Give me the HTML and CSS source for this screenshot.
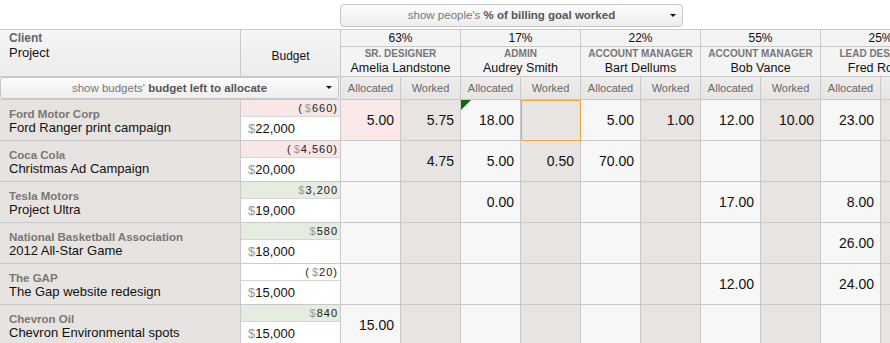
FILE: index.html
```html
<!DOCTYPE html>
<html lang="en">
<head>
    <meta charset="UTF-8">
    <title>Budget Allocation</title>
    <link rel="stylesheet" href="styles.css">
</head>
<body>
    <div class="toolbar">
        <div class="picker picker-people">
            <span>show people's <b>% of billing goal worked</b></span>
            <span class="caret"></span>
        </div>
    </div>
    <table class="grid">
        <colgroup>
            <col class="col-client">
            <col class="col-budget">
            <col class="col-sub"><col class="col-sub">
            <col class="col-sub"><col class="col-sub">
            <col class="col-sub"><col class="col-sub">
            <col class="col-sub"><col class="col-sub">
            <col class="col-sub"><col class="col-sub">
        </colgroup>
        <thead>
            <tr class="row-pct">
                <th class="h-client" rowspan="2">
                    <span class="h-label">Client</span>
                    <span class="h-project">Project</span>
                </th>
                <th class="h-budget" rowspan="2">Budget</th>
                <th class="pct" colspan="2">63%</th>
                <th class="pct" colspan="2">17%</th>
                <th class="pct" colspan="2">22%</th>
                <th class="pct" colspan="2">55%</th>
                <th class="pct" colspan="2">25%</th>
            </tr>
            <tr class="row-person">
                <th class="person" colspan="2"><span class="role">SR. DESIGNER</span><span class="name">Amelia Landstone</span></th>
                <th class="person" colspan="2"><span class="role">ADMIN</span><span class="name">Audrey Smith</span></th>
                <th class="person" colspan="2"><span class="role">ACCOUNT MANAGER</span><span class="name">Bart Dellums</span></th>
                <th class="person" colspan="2"><span class="role">ACCOUNT MANAGER</span><span class="name">Bob Vance</span></th>
                <th class="person" colspan="2"><span class="role">LEAD DESIGNER</span><span class="name">Fred Rosen</span></th>
            </tr>
            <tr class="row-sub">
                <th class="h-select" colspan="2">
                    <div class="picker picker-budget">
                        <span>show budgets' <b>budget left to allocate</b></span>
                        <span class="caret"></span>
                    </div>
                </th>
                <th class="sub">Allocated</th><th class="sub">Worked</th>
                <th class="sub">Allocated</th><th class="sub">Worked</th>
                <th class="sub">Allocated</th><th class="sub">Worked</th>
                <th class="sub">Allocated</th><th class="sub">Worked</th>
                <th class="sub">Allocated</th><th class="sub">Worked</th>
            </tr>
        </thead>
        <tbody>
            <tr>
                <td class="client"><span class="client-name">Ford Motor Corp</span><span class="project">Ford Ranger print campaign</span></td>
                <td class="budget"><div class="left neg">(<i>$</i>660)</div><div class="amount"><i>$</i>22,000</div></td>
                <td class="alloc over">5.00</td><td class="work">5.75</td>
                <td class="alloc note">18.00</td><td class="work selected"></td>
                <td class="alloc">5.00</td><td class="work">1.00</td>
                <td class="alloc">12.00</td><td class="work">10.00</td>
                <td class="alloc">23.00</td><td class="work"></td>
            </tr>
            <tr>
                <td class="client"><span class="client-name">Coca Cola</span><span class="project">Christmas Ad Campaign</span></td>
                <td class="budget"><div class="left neg">(<i>$</i>4,560)</div><div class="amount"><i>$</i>20,000</div></td>
                <td class="alloc"></td><td class="work">4.75</td>
                <td class="alloc">5.00</td><td class="work">0.50</td>
                <td class="alloc">70.00</td><td class="work"></td>
                <td class="alloc"></td><td class="work"></td>
                <td class="alloc"></td><td class="work"></td>
            </tr>
            <tr>
                <td class="client"><span class="client-name">Tesla Motors</span><span class="project">Project Ultra</span></td>
                <td class="budget"><div class="left pos"><i>$</i>3,200</div><div class="amount"><i>$</i>19,000</div></td>
                <td class="alloc"></td><td class="work"></td>
                <td class="alloc">0.00</td><td class="work"></td>
                <td class="alloc"></td><td class="work"></td>
                <td class="alloc">17.00</td><td class="work"></td>
                <td class="alloc">8.00</td><td class="work"></td>
            </tr>
            <tr>
                <td class="client"><span class="client-name">National Basketball Association</span><span class="project">2012 All-Star Game</span></td>
                <td class="budget"><div class="left pos"><i>$</i>580</div><div class="amount"><i>$</i>18,000</div></td>
                <td class="alloc"></td><td class="work"></td>
                <td class="alloc"></td><td class="work"></td>
                <td class="alloc"></td><td class="work"></td>
                <td class="alloc"></td><td class="work"></td>
                <td class="alloc">26.00</td><td class="work"></td>
            </tr>
            <tr>
                <td class="client"><span class="client-name">The GAP</span><span class="project">The Gap website redesign</span></td>
                <td class="budget"><div class="left">(<i>$</i>20)</div><div class="amount"><i>$</i>15,000</div></td>
                <td class="alloc"></td><td class="work"></td>
                <td class="alloc"></td><td class="work"></td>
                <td class="alloc"></td><td class="work"></td>
                <td class="alloc">12.00</td><td class="work"></td>
                <td class="alloc">24.00</td><td class="work"></td>
            </tr>
            <tr>
                <td class="client"><span class="client-name">Chevron Oil</span><span class="project">Chevron Environmental spots</span></td>
                <td class="budget"><div class="left pos"><i>$</i>840</div><div class="amount"><i>$</i>15,000</div></td>
                <td class="alloc">15.00</td><td class="work"></td>
                <td class="alloc"></td><td class="work"></td>
                <td class="alloc"></td><td class="work"></td>
                <td class="alloc"></td><td class="work"></td>
                <td class="alloc"></td><td class="work"></td>
            </tr>
        </tbody>
    </table>
</body>
</html>
```

FILE: styles.css
```css
html, body {
    margin: 0;
    height: 100%;
    overflow: hidden;
}
body {
    font-family: 'Liberation Sans', Arial, sans-serif;
    background-color: #fff;
    color: #111;
}
.toolbar {
    height: 29px;
    padding-left: 340px;
    box-sizing: border-box;
    padding-top: 4px;
}
.picker {
    position: relative;
    box-sizing: border-box;
    height: 23px;
    border: 1px solid #c6c6c6;
    border-radius: 4px;
    background: linear-gradient(#fdfdfd, #ededed);
    font-size: 11.5px;
    color: #777;
    text-align: center;
    line-height: 21px;
    white-space: nowrap;
}
.picker b {
    color: #555;
}
.picker-people {
    width: 343px;
}
.caret {
    position: absolute;
    right: 6px;
    top: 9px;
    border-left: 3px solid transparent;
    border-right: 3px solid transparent;
    border-top: 3px solid #111;
}
.grid {
    border-collapse: separate;
    border-spacing: 0;
    table-layout: fixed;
    width: 941px;
    border-top: 1px solid #c9c9c9;
}
.col-client { width: 241px; }
.col-budget { width: 100px; }
.col-sub { width: 60px; }
th, td {
    box-sizing: border-box;
    padding: 0;
    border-right: 1px solid #c9c9c9;
    border-bottom: 1px solid #c9c9c9;
    overflow: hidden;
    white-space: nowrap;
}
th {
    font-weight: normal;
    background: #f4f4f4;
}
.h-client {
    text-align: left;
    vertical-align: top;
    padding: 1px 0 0 9px;
    background: linear-gradient(#f6f6f6, #ececec);
}
.h-label {
    display: block;
    font-size: 12px;
    font-weight: bold;
    color: #666;
    line-height: 14px;
}
.h-project {
    display: block;
    font-size: 13px;
    color: #111;
    line-height: 16px;
}
.h-budget {
    font-size: 12px;
    color: #111;
    padding-top: 5px;
    background: linear-gradient(#f6f6f6, #ececec);
}
.row-pct th.pct {
    height: 17px;
    font-size: 12px;
    line-height: 15px;
    color: #111;
}
.row-person th {
    height: 30px;
}
.role {
    display: block;
    font-size: 10px;
    font-weight: bold;
    color: #777;
    line-height: 12px;
}
.name {
    display: block;
    font-size: 12.5px;
    line-height: 16px;
    color: #111;
}
.row-sub th {
    height: 22px;
}
.h-select {
    background: #f0f0f0;
    padding-right: 1px;
}
.picker-budget {
    width: 339px;
    height: 22px;
    line-height: 20px;
    border-radius: 3px;
}
.picker-budget .caret {
    top: 8px;
}
.sub {
    font-size: 11px;
    color: #666;
    background: linear-gradient(#efedeb, #e7e5e3);
}
tbody td {
    height: 41px;
    font-size: 14px;
    text-align: right;
    padding-right: 6px;
    vertical-align: middle;
}
td.client {
    text-align: left;
    padding: 1px 0 0 9px;
    background: #e7e3e0;
}
.client-name {
    display: block;
    font-size: 11.5px;
    font-weight: bold;
    color: #777;
    line-height: 14px;
}
.project {
    display: block;
    font-size: 13px;
    color: #111;
    line-height: 14px;
}
td.budget {
    padding: 0;
    text-align: left;
    vertical-align: top;
    background: #fff;
}
.left {
    height: 16px;
    border-bottom: 1px solid #d6d6d6;
    font-size: 11px;
    line-height: 16px;
    letter-spacing: 1px;
    text-align: right;
    padding-right: 2px;
    color: #222;
}
.left.neg {
    background: #f9e6e6;
}
.left.pos {
    background: #e5ece0;
}
.left i, .amount i {
    font-style: normal;
    color: #999;
}
.left i {
    margin-left: 2px;
}
.amount {
    font-size: 13px;
    line-height: 23px;
    padding-left: 7px;
}
td.alloc {
    background: #f7f7f7;
}
td.work {
    background: #e7e4e1;
}
td.over {
    background: #fbe9e9;
}
td.note {
    position: relative;
}
td.note::before {
    content: "";
    position: absolute;
    top: 0;
    left: 0;
    border-top: 10px solid #0d6a0d;
    border-right: 10px solid transparent;
}
td.selected {
    position: relative;
    overflow: visible;
}
td.selected::after {
    content: "";
    position: absolute;
    top: 0;
    left: 0;
    right: -1px;
    bottom: -1px;
    border: 1px solid #f0a23c;
}
```
